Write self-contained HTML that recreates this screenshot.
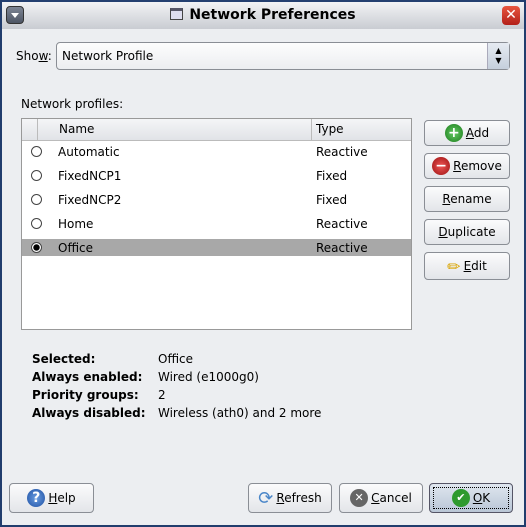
<!DOCTYPE html><html><head><style>
*{box-sizing:border-box}body{margin:0;width:526px;height:527px;overflow:hidden;background:#1d3a6e;font-family:"DejaVu Sans","Liberation Sans",sans-serif;font-size:12px;color:#000}
.win{position:absolute;left:0;top:0;width:526px;height:527px;background:#eceef1;box-shadow:inset 0 0 0 2px #213d6d}
.title{position:absolute;left:2px;top:0;width:522px;height:29px;background:linear-gradient(#f2f3f5,#c9ccd2);border-top:2px solid #233f70}
.title .t{position:absolute;left:0;right:0;top:5px;text-align:center;font-weight:bold;font-size:14px}
.a{position:absolute;white-space:nowrap}
.btn{position:absolute;border:1px solid #8a8e95;border-radius:4px;background:linear-gradient(#fbfbfc,#e3e5e9);display:flex;align-items:center;justify-content:center;gap:3px}
u{text-decoration:underline}
.ico{width:18px;height:18px;border-radius:50%;display:inline-block;color:#fff;font-weight:bold;text-align:center;line-height:18px;font-size:14px}
.r{position:absolute;left:31px;width:11px;height:11px;border:1.6px solid #444;border-radius:50%;background:#fff}
</style></head><body><div class="win">
<div class="title"><div class="a" style="left:4px;top:4px;width:18px;height:18px;border-radius:4px;background:linear-gradient(#7d8594,#4d5564);border:1px solid #333"><div style="margin:6px auto 0;width:0;height:0;border-left:4px solid transparent;border-right:4px solid transparent;border-top:5px solid #fff"></div></div>
<div class="t"><span style="display:inline-block;width:13px;height:12px;border:1px solid #444;background:#dde;vertical-align:-1px;margin-right:6px;border-top:3px solid #556"></span>Network Preferences</div>
<div class="a" style="right:4px;top:4px;width:18px;height:19px;border-radius:4px;background:linear-gradient(#e8553e,#b3201a);color:#fff;font-weight:bold;text-align:center;line-height:18px;font-size:14px">✕</div></div>
<div class="a" style="left:16px;top:49px">Sho<u>w</u>:</div>
<div class="a" style="left:56px;top:42px;width:454px;height:28px;border:1px solid #8a8e95;border-radius:4px;background:linear-gradient(#fdfdfd,#eceef1)"><span class="a" style="left:5px;top:6px">Network Profile</span><div class="a" style="right:0;top:0;width:22px;height:26px;border-left:1px solid #aab;background:linear-gradient(#e6ebf2,#c5cfdc);text-align:center;font-size:8px;line-height:10px;padding-top:3px">▲<br>▼</div></div>
<div class="a" style="left:21px;top:97px">Network profiles:</div>
<div class="a" style="left:21px;top:118px;width:391px;height:212px;background:#fff;border:1px solid #999">
<div style="height:22px;background:linear-gradient(#f4f5f7,#e1e3e7);border-bottom:1px solid #bbb;position:relative"><span class="a" style="left:15px;top:0;height:21px;border-left:1px solid #bbb"></span><span class="a" style="left:37px;top:3px">Name</span><span class="a" style="left:289px;top:0;height:21px;border-left:1px solid #bbb"></span><span class="a" style="left:294px;top:3px">Type</span></div></div>
<div class="a" style="left:22px;top:239px;width:389px;height:17px;background:#a8a8a8"></div>
<div class="r" style="top:146px"></div><div class="a" style="left:58px;top:145px">Automatic</div><div class="a" style="left:316px;top:145px">Reactive</div>
<div class="r" style="top:170px"></div><div class="a" style="left:58px;top:169px">FixedNCP1</div><div class="a" style="left:316px;top:169px">Fixed</div>
<div class="r" style="top:194px"></div><div class="a" style="left:58px;top:193px">FixedNCP2</div><div class="a" style="left:316px;top:193px">Fixed</div>
<div class="r" style="top:218px"></div><div class="a" style="left:58px;top:217px">Home</div><div class="a" style="left:316px;top:217px">Reactive</div>
<div class="r" style="top:242px;background:radial-gradient(#000 45%,#fff 55%)"></div><div class="a" style="left:58px;top:241px">Office</div><div class="a" style="left:316px;top:241px">Reactive</div>
<div class="btn" style="left:424px;top:120px;width:86px;height:26px"><span class="ico" style="background:radial-gradient(#6c6,#197a19)">+</span><span><u>A</u>dd</span></div>
<div class="btn" style="left:424px;top:153px;width:86px;height:26px"><span class="ico" style="background:radial-gradient(#e55,#9a1111)">−</span><span><u>R</u>emove</span></div>
<div class="btn" style="left:424px;top:186px;width:86px;height:26px"><span><u>R</u>ename</span></div>
<div class="btn" style="left:424px;top:219px;width:86px;height:26px"><span><u>D</u>uplicate</span></div>
<div class="btn" style="left:424px;top:252px;width:86px;height:28px"><span style="font-size:16px;color:#d9a400">✏</span><span><u>E</u>dit</span></div>
<div class="a" style="left:32px;top:350px;font-weight:bold;line-height:18px">Selected:<br>Always enabled:<br>Priority groups:<br>Always disabled:</div>
<div class="a" style="left:158px;top:350px;line-height:18px">Office<br>Wired (e1000g0)<br>2<br>Wireless (ath0) and 2 more</div>
<div class="btn" style="left:9px;top:483px;width:85px;height:30px"><span class="ico" style="background:radial-gradient(#6a9de0,#1d4fa3)">?</span><span><u>H</u>elp</span></div>
<div class="btn" style="left:248px;top:483px;width:84px;height:30px"><span style="color:#4a86c8;font-size:18px">⟳</span><span><u>R</u>efresh</span></div>
<div class="btn" style="left:339px;top:483px;width:84px;height:30px"><span class="ico" style="background:#666;font-size:11px">✕</span><span><u>C</u>ancel</span></div>
<div class="btn" style="left:429px;top:483px;width:84px;height:30px;background:linear-gradient(#dfe6ef,#b9c6d6);border-color:#556"><div class="a" style="left:3px;top:3px;right:3px;bottom:3px;border:1px dotted #000"></div><span class="ico" style="background:#2e9a2e;font-size:11px">✔</span><span><u>O</u>K</span></div>
</div></body></html>
